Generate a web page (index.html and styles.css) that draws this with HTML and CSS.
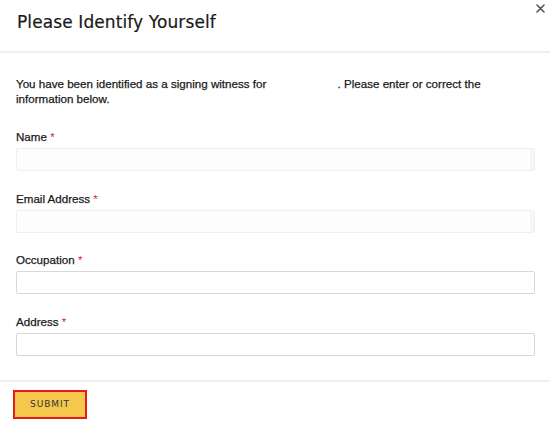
FILE: index.html
```html
<!DOCTYPE html>
<html>
<head>
<meta charset="utf-8">
<link rel="stylesheet" href="styles.css">
</head>
<body>
<div class="modal">
  <div class="modal-header">
    <h1 class="title">Please Identify Yourself</h1>
    <button class="close" aria-label="Close">
      <svg width="9" height="9" viewBox="0 0 9 9"><path d="M1 1L8 8M8 1L1 8" stroke="#555" stroke-width="1.6" stroke-linecap="round"/></svg>
    </button>
  </div>
  <div class="modal-body">
    <p class="intro">You have been identified as a signing witness for <span class="redact"></span>. Please enter or correct the<br>information below.</p>
    <div class="field">
      <label class="label">Name <span class="req">*</span></label>
      <input class="input soft" type="text">
    </div>
    <div class="field">
      <label class="label">Email Address <span class="req">*</span></label>
      <input class="input soft" type="text">
    </div>
    <div class="field">
      <label class="label">Occupation <span class="req">*</span></label>
      <input class="input" type="text">
    </div>
    <div class="field">
      <label class="label">Address <span class="req">*</span></label>
      <input class="input" type="text">
    </div>
  </div>
  <div class="modal-footer">
    <button class="submit">SUBMIT</button>
  </div>
</div>
</body>
</html>
```
FILE: styles.css
```css
html, body {
  margin: 0;
  padding: 0;
  background: #fff;
}
.modal {
  width: 550px;
  height: 423px;
  background: #fff;
  font-family: "Liberation Sans", Arial, sans-serif;
  color: #222;
}
.modal-header {
  position: relative;
  height: 51px;
  border-bottom: 2px solid #f0f0f0;
  display: flex;
  align-items: flex-start;
}
.title {
  margin: 0;
  padding: 12px 0 0 17px;
  font-family: "DejaVu Sans", sans-serif;
  font-weight: normal;
  font-size: 17px;
  letter-spacing: 0.1px;
  color: #1a1a1a;
  -webkit-text-stroke: 0.2px #1a1a1a;
}
.close {
  position: absolute;
  top: 3px;
  right: 4px;
  width: 11px;
  height: 11px;
  padding: 0;
  border: 0;
  background: none;
  display: flex;
  align-items: center;
  justify-content: center;
}
.modal-body {
  padding: 23px 15px 0 16px;
}
.intro {
  margin: 0 0 24px;
  font-size: 11.6px;
  line-height: 15px;
  color: #1a1a1a;
  -webkit-text-stroke: 0.25px #1a1a1a;
}
.redact {
  display: inline-block;
  width: 68px;
}
.field {
  display: flex;
  flex-direction: column;
  margin-bottom: 20.6px;
}
.field:last-child {
  margin-bottom: 0;
}
.label {
  font-size: 11.6px;
  line-height: 13px;
  margin-bottom: 5px;
  color: #1a1a1a;
  -webkit-text-stroke: 0.25px #1a1a1a;
}
.req {
  color: #d23;
  -webkit-text-stroke: 0;
}
.input {
  box-sizing: border-box;
  height: 23px;
  width: 519px;
  border: 1px solid #d8d8d8;
  border-radius: 2px;
  background: #fff;
  margin: 0;
  padding: 0 6px;
}
.input.soft {
  border: 1px solid #efefef;
  background: #fdfdfd;
  box-shadow: inset -4px 0 0 #f6f6f6;
}
.modal-footer {
  margin-top: 24px;
  border-top: 2px solid #f0f0f0;
  padding: 8px 0 0 13px;
}
.submit {
  box-sizing: border-box;
  width: 74px;
  height: 29px;
  background: #f5c84b;
  border: 2px solid #e31b1b;
  font-family: "DejaVu Sans", sans-serif;
  font-size: 9px;
  letter-spacing: 0.9px;
  color: #333;
  padding: 0;
}
```
